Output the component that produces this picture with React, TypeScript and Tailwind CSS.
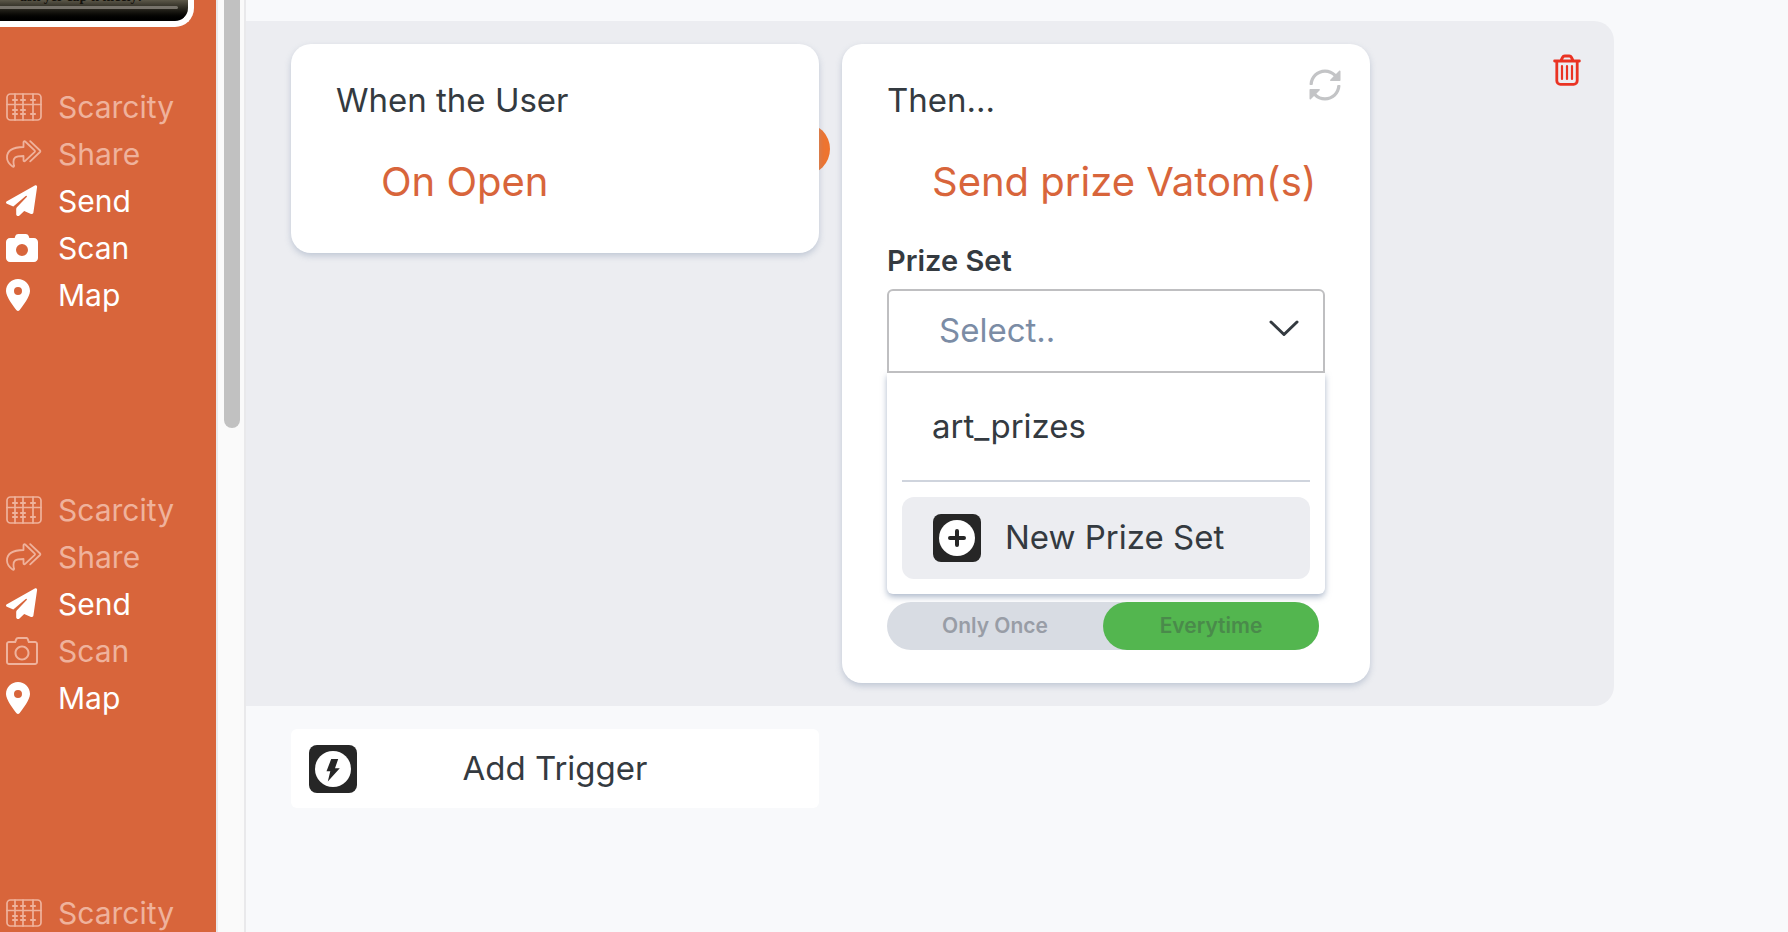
import { useState } from "react";
import type { ReactNode } from "react";
import { FaCamera, FaLocationDot } from "react-icons/fa6";

type Action = "scarcity" | "share" | "send" | "scan" | "map";

const actionLabels: Record<Action, string> = {
  scarcity: "Scarcity",
  share: "Share",
  send: "Send",
  scan: "Scan",
  map: "Map",
};

const vatoms: { id: number; actions: Action[]; enabled: Action[] }[] = [
  { id: 1, actions: ["scarcity", "share", "send", "scan", "map"], enabled: ["send", "scan", "map"] },
  { id: 2, actions: ["scarcity", "share", "send", "scan", "map"], enabled: ["send", "map"] },
  { id: 3, actions: ["scarcity"], enabled: [] },
];

function AbacusIcon() {
  return (
    <svg viewBox="0 0 36 28" className="h-7 w-9" fill="none" stroke="currentColor" strokeWidth="1.7" strokeLinecap="round">
      <rect x="1" y="1" width="34" height="26" rx="3.5" />
      <path d="M1 11.5h34M9 1v26M17 1v26M27 1v26" />
      <path strokeWidth="2.2" d="M7 7h4M15 7h4M25 7h4M7 17h4M15 17h4M7 21h4M15 21h4M25 21h4" />
    </svg>
  );
}

function ShareIcon() {
  return (
    <svg viewBox="0 0 36 28" className="h-7 w-9" fill="none" stroke="currentColor" strokeWidth="1.8" strokeLinecap="round" strokeLinejoin="round">
      <path d="M17.5 2.2c0-1 .9-1.4 1.7-.7l9.3 8.8c.6.6.6 1.2 0 1.8l-9.3 8.8c-.8.7-1.7.3-1.7-.7V16c-7.5 0-11.6 1-9.5 9.6.3 1-.6 1.5-1.4.9C3.3 24 1 20.8 1 17.4 1 9.6 8.5 7.2 17.5 7z" />
      <path d="M24.2 1.2l9.8 9.3c.5.5.5 1 0 1.5l-9.8 9.3" />
    </svg>
  );
}

function PlaneIcon() {
  return (
    <svg viewBox="0 0 32 32" className="h-8 w-8" fill="currentColor">
      <path d="M.9 16.2 28.8.4c1.2-.7 2.5.2 2.3 1.6l-3.7 25.6c-.2 1.2-1.3 1.8-2.4 1.4l-6.8-2.9-4.7 4.4c-1.3 1.2-3.3.4-3.3-1.3V24c0-.6.2-1 .5-1.400L20.700 12.100c.7-.8-.2-1.700-1-1L7.300 21.500.9 18.800c-1.200-.5-1.200-2 0-2.600z" />
    </svg>
  );
}

function CameraOutlineIcon() {
  return (
    <svg viewBox="0 0 512 512" className="h-8 w-8" fill="currentColor">
      <path d="M324.3 64c3.3 0 6.3 2.1 7.5 5.2l22.1 58.8H464c8.8 0 16 7.2 16 16v288c0 8.8-7.2 16-16 16H48c-8.8 0-16-7.2-16-16V144c0-8.8 7.2-16 16-16h110.2l20.1-53.6c2.3-6.2 8.3-10.4 15-10.4h131m0-32h-131c-20 0-37.9 12.4-44.9 31.1L136 96H48c-26.5 0-48 21.5-48 48v288c0 26.5 21.5 48 48 48h416c26.5 0 48-21.5 48-48V144c0-26.5-21.5-48-48-48h-88l-14.3-38c-5.8-15.7-20.7-26-37.4-26zM256 408c-66.2 0-120-53.8-120-120s53.8-120 120-120 120 53.8 120 120-53.8 120-120 120zm0-208c-48.5 0-88 39.5-88 88s39.5 88 88 88 88-39.5 88-88-39.5-88-88-88z" />
    </svg>
  );
}

function SyncIcon() {
  return (
    <svg viewBox="0 0 512 512" className="h-8 w-8" fill="currentColor">
      <path d="M483.515 28.485L431.35 80.65C386.475 35.767 324.485 8 256 8 123.228 8 14.824 112.338 8.31 243.493 7.971 250.311 13.475 256 20.301 256h28.045c6.353 0 11.613-4.952 11.973-11.294C66.161 141.649 151.453 60 256 60c54.163 0 103.157 21.923 138.614 57.386l-54.128 54.129c-7.56 7.56-2.206 20.485 8.485 20.485H492c6.627 0 12-5.373 12-12V36.971c0-10.691-12.926-16.045-20.485-8.486z" />
      <path d="M491.699 256h-28.045c-6.353 0-11.613 4.952-11.973 11.294C445.839 370.351 360.547 452 256 452c-54.163 0-103.157-21.923-138.614-57.386l54.128-54.129c7.56-7.56 2.206-20.485-8.485-20.485H20c-6.627 0-12 5.373-12 12v143.029c0 10.691 12.926 16.045 20.485 8.485L80.65 431.35C125.525 476.233 187.516 504 256 504c132.773 0 241.176-104.338 247.69-235.493.339-6.818-5.165-12.507-11.991-12.507z" />
    </svg>
  );
}

function TrashIcon() {
  return (
    <svg viewBox="0 0 28 32" className="h-8 w-7" fill="none" stroke="currentColor" strokeLinecap="round" strokeLinejoin="round">
      <path strokeWidth="2.8" d="M1.6 7h24.8M3.8 7v19.8a3.6 3.6 0 0 0 3.6 3.6h13.2a3.6 3.6 0 0 0 3.6-3.6V7M8 6.5l1.5-3c.5-1 1-1.5 2.2-1.5h4.6c1.2 0 1.7.5 2.2 1.5L20 6.5" />
      <path strokeWidth="2.2" d="M9 12v13M14 12v13M19 12v13" />
    </svg>
  );
}

function TileIcon({ children }: { children: ReactNode }) {
  return (
    <svg viewBox="0 0 48 48" className="h-12 w-12 shrink-0">
      <rect width="48" height="48" rx="8" fill="#262626" />
      <circle cx="24" cy="24" r="18" fill="#fff" />
      {children}
    </svg>
  );
}

function ActionIcon({ action, enabled }: { action: Action; enabled: boolean }) {
  if (action === "scarcity") return <AbacusIcon />;
  if (action === "share") return <ShareIcon />;
  if (action === "send") return <PlaneIcon />;
  if (action === "scan") return enabled ? <FaCamera className="h-8 w-8" /> : <CameraOutlineIcon />;
  return <FaLocationDot className="h-8 w-6" />;
}

function ActionList({ actions, enabled }: { actions: Action[]; enabled: Action[] }) {
  return (
    <ul className="pl-1.5">
      {actions.map((action) => {
        const isEnabled = enabled.includes(action);
        return (
          <li
            key={action}
            className={`flex h-[47px] items-center gap-4 text-[30px] leading-9 ${isEnabled ? "text-white" : "text-[#efb29c]"}`}
          >
            <span className="w-9">
              <ActionIcon action={action} enabled={isEnabled} />
            </span>
            {actionLabels[action]}
          </li>
        );
      })}
    </ul>
  );
}

function Sidebar() {
  return (
    <aside className="w-[216px] shrink-0 overflow-hidden bg-[#d8653b]">
      <div className="mr-[22px] h-[27px] overflow-hidden rounded-br-[19px] border-r-[6px] border-b-[6px] border-white bg-linear-to-b from-[#5c5849] to-black">
        <p className="-mt-3 pl-5 font-['Liberation_Serif',serif] text-[14px] leading-[18px] font-bold text-[#14120d]">
          ask yer cap'n nicely!
        </p>
        <div className="mr-2.5 h-[3px] rounded-r-full bg-[#77736b]" />
      </div>
      <div className="mt-14 flex flex-col gap-[168px]">
        {vatoms.map((vatom) => (
          <ActionList key={vatom.id} actions={vatom.actions} enabled={vatom.enabled} />
        ))}
      </div>
    </aside>
  );
}

function TriggerCard() {
  return (
    <div className="relative w-[528px]">
      <span className="absolute top-1/2 -right-[11px] h-[52px] w-[52px] -translate-y-1/2 rounded-full bg-[#ee742f]" />
      <section className="relative rounded-[20px] bg-white px-[45px] pt-[35px] pb-[46px] shadow-[0_3px_6px_rgba(140,155,180,0.45)]">
        <h2 className="text-[33px] leading-[42px]">When the User</h2>
        <p className="mt-9 pl-[45px] text-[40px] leading-[50px] text-[#d8653b]">On Open</p>
      </section>
    </div>
  );
}

function PrizeSetField() {
  const [prizeSet, setPrizeSet] = useState("");

  return (
    <div className="mt-[34px]">
      <label htmlFor="prize-set" className="block text-[29px] leading-10 font-semibold">
        Prize Set
      </label>
      <div className="relative mt-2">
        <select
          id="prize-set"
          value={prizeSet}
          onChange={(event) => setPrizeSet(event.target.value)}
          className="h-[84px] w-full appearance-none rounded-t-md border-2 border-[#bfbfc1] bg-white pl-[50px] text-[33px] text-[#7b8ca5] outline-none"
        >
          <option value="">Select..</option>
          <option value="art_prizes">art_prizes</option>
        </select>
        <svg
          viewBox="0 0 30 18"
          className="pointer-events-none absolute top-[31px] right-[26px] h-[18px] w-[30px]"
          fill="none"
          stroke="currentColor"
          strokeWidth="3"
          strokeLinecap="round"
          strokeLinejoin="round"
        >
          <path d="M2 2l13 12.5L28 2" />
        </svg>
      </div>
      <div className="rounded-b-md bg-white p-[15px] text-[33px] shadow-[0_3px_6px_rgba(120,138,168,0.6)]">
        <button type="button" onClick={() => setPrizeSet("art_prizes")} className="block h-[77px] w-full px-[30px] text-left">
          art_prizes
        </button>
        <hr className="mt-[15px] border-t-2 border-[#cfd4dd]" />
        <button type="button" className="mt-[15px] flex h-[82px] w-full items-center gap-6 rounded-xl bg-[#ecedf1] px-[31px]">
          <TileIcon>
            <path d="M24 17v14M17 24h14" stroke="#262626" strokeWidth="4" strokeLinecap="round" />
          </TileIcon>
          New Prize Set
        </button>
      </div>
    </div>
  );
}

function FrequencyToggle() {
  const [frequency, setFrequency] = useState("everytime");
  const options = [
    { value: "once", label: "Only Once" },
    { value: "everytime", label: "Everytime" },
  ];

  return (
    <div className="mt-2 mr-1.5 flex h-12 rounded-full bg-[#d8dce3]">
      {options.map((option) => (
        <label
          key={option.value}
          className={`flex flex-1 items-center justify-center rounded-full text-[21px] leading-7 font-semibold ${
            frequency === option.value ? "bg-[#53b64f] text-[#4a8a4b]" : "text-[#989da6]"
          }`}
        >
          <input
            type="radio"
            name="frequency"
            value={option.value}
            checked={frequency === option.value}
            onChange={() => setFrequency(option.value)}
            className="sr-only"
          />
          {option.label}
        </label>
      ))}
    </div>
  );
}

function ResultCard() {
  return (
    <section className="w-[528px] rounded-[20px] bg-white pr-[29px] pb-[33px] pl-[45px] shadow-[0_3px_6px_rgba(140,155,180,0.45)]">
      <div className="flex items-start justify-between">
        <h2 className="pt-[35px] text-[33px] leading-[42px]">Then...</h2>
        <button type="button" aria-label="Change action" className="mt-[25px] text-[#c3c4c6]">
          <SyncIcon />
        </button>
      </div>
      <p className="mt-9 pl-[45px] text-[40px] leading-[50px] whitespace-nowrap text-[#d8653b]">
        Send prize Vatom(s)
      </p>
      <div className="mr-4">
        <PrizeSetField />
        <FrequencyToggle />
      </div>
    </section>
  );
}

export default function App() {
  return (
    <div className="flex h-screen overflow-hidden bg-[#f8f9fb] font-[Inter,sans-serif] text-[#343a40]">
      <Sidebar />
      <div className="w-[30px] shrink-0 border-x-2 border-[#e9e9eb] bg-[#fafafa] pr-1 pl-1.5">
        <div className="h-[428px] rounded-b-full bg-[#c1c1c1]" />
      </div>
      <main className="min-w-0 flex-1 pt-[21px]">
        <div className="mr-[174px] flex items-start gap-[23px] rounded-r-[20px] bg-[#ecedf1] py-[23px] pr-[33px] pl-[45px]">
          <TriggerCard />
          <ResultCard />
          <button type="button" aria-label="Delete trigger" className="mt-2.5 ml-auto text-[#ea3323]">
            <TrashIcon />
          </button>
        </div>
        <button type="button" className="mt-[23px] ml-[45px] flex h-[79px] w-[528px] items-center rounded-md bg-white px-[18px] text-[33px]">
          <TileIcon>
            <path d="M22.2 14h7l-3.2 9.3h4.8L18.8 36.5l2.5-10.2h-3.8z" fill="#262626" />
          </TileIcon>
          <span className="flex-1 pr-12 text-center">Add Trigger</span>
        </button>
      </main>
    </div>
  );
}
